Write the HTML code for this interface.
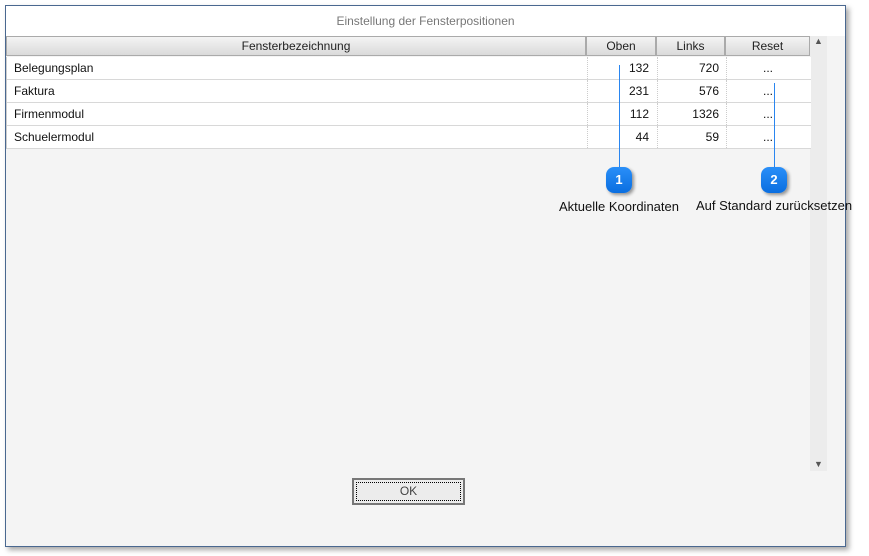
<!DOCTYPE html>
<html><head><style>
body{margin:0;width:869px;height:556px;background:#fff;font-family:"Liberation Sans",sans-serif;position:relative;overflow:hidden}
.win{position:absolute;left:5px;top:5px;width:839px;height:540px;border:1px solid #4a6890;background:#f4f4f4;box-shadow:3px 3px 5px rgba(0,0,0,.35)}
.title{position:absolute;left:0;top:0;width:839px;height:30px;background:#fff;text-align:center;font-size:12px;color:#777;line-height:30px}
.a{position:absolute}
.h{position:absolute;top:30px;height:20px;background:linear-gradient(#f4f4f4,#dadada);border:1px solid #aaa;box-sizing:border-box;font-size:12px;text-align:center;line-height:18px;color:#222}
.grid{position:absolute;left:0;top:51px;width:804px;background:#fff}
.r{height:22px;border-bottom:1px solid #d8d8d8;position:relative;font-size:12px;color:#111;line-height:22px}
.r span{position:absolute}
.c{border-left:1px dotted #ccc;height:22px;top:0}
.bub{position:absolute;width:26px;height:26px;border-radius:8px;background:linear-gradient(#2a8ff8,#0a6ee0);color:#fff;font-weight:bold;font-size:13px;text-align:center;line-height:26px;box-shadow:2px 2px 3px rgba(0,0,0,.4)}
.ln{position:absolute;width:1px;background:#2a86f0}
.lbl{position:absolute;font-size:13px;color:#111}
</style></head><body>
<div class="win">
<div class="title">Einstellung der Fensterpositionen</div>
<div class="h" style="left:0;width:580px">Fensterbezeichnung</div>
<div class="h" style="left:580px;width:70px">Oben</div>
<div class="h" style="left:650px;width:69px">Links</div>
<div class="h" style="left:719px;width:85px">Reset</div>
<div class="a" style="left:804px;top:30px;width:17px;height:435px;background:#ececec;font-size:9px;color:#555;text-align:center">▲<div style="position:absolute;bottom:2px;width:17px">▼</div></div>
<div class="grid" style="border-left:1px solid #ccc">
<div class="r"><span style="left:7px">Belegungsplan</span><span class="c" style="left:580px"></span><span style="right:162px">132</span><span class="c" style="left:650px"></span><span style="right:92px">720</span><span class="c" style="left:719px"></span><span style="left:756px">...</span></div>
<div class="r"><span style="left:7px">Faktura</span><span class="c" style="left:580px"></span><span style="right:162px">231</span><span class="c" style="left:650px"></span><span style="right:92px">576</span><span class="c" style="left:719px"></span><span style="left:756px">...</span></div>
<div class="r"><span style="left:7px">Firmenmodul</span><span class="c" style="left:580px"></span><span style="right:162px">112</span><span class="c" style="left:650px"></span><span style="right:92px">1326</span><span class="c" style="left:719px"></span><span style="left:756px">...</span></div>
<div class="r"><span style="left:7px">Schuelermodul</span><span class="c" style="left:580px"></span><span style="right:162px">44</span><span class="c" style="left:650px"></span><span style="right:92px">59</span><span class="c" style="left:719px"></span><span style="left:756px">...</span></div>
</div>
<div class="a" style="left:346px;top:472px;width:113px;height:27px;border:2px solid #777;box-sizing:border-box;background:#ececec"><div style="position:absolute;left:2px;top:2px;right:2px;bottom:2px;border:1px dotted #000;font-size:12px;text-align:center;line-height:17px;color:#444">OK</div></div>
</div>
<div class="ln" style="left:619px;top:65px;height:104px"></div>
<div class="ln" style="left:774px;top:83px;height:86px"></div>
<div class="bub" style="left:606px;top:167px">1</div>
<div class="bub" style="left:761px;top:167px">2</div>
<div class="lbl" style="left:559px;top:199px">Aktuelle Koordinaten</div>
<div class="lbl" style="left:696px;top:198px">Auf Standard zurücksetzen</div>
</body></html>
